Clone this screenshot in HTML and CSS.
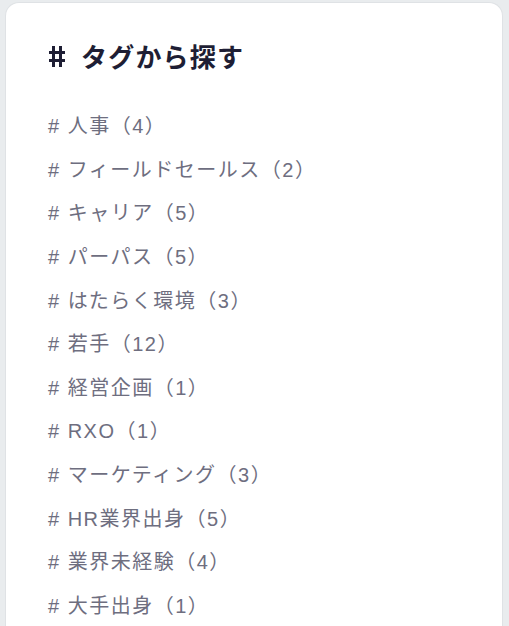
FILE: index.html
```html
<!DOCTYPE html>
<html lang="ja">
<head>
<meta charset="utf-8">
<link rel="stylesheet" href="styles.css">
</head>
<body>
<section class="card">
  <h2 class="title">
    <svg class="hash-icon" viewBox="0 0 16 21" width="16" height="21" aria-hidden="true">
      <rect x="3" y="0" width="3" height="21" fill="#1e1e34"/>
      <rect x="10" y="0" width="3" height="21" fill="#1e1e34"/>
      <rect x="0" y="5" width="16" height="3" fill="#1e1e34"/>
      <rect x="0" y="13" width="16" height="3" fill="#1e1e34"/>
    </svg>
    <span>タグから探す</span>
  </h2>
  <ul class="tags">
    <li><a class="tag"># 人事（4）</a></li>
    <li><a class="tag"># フィールドセールス（2）</a></li>
    <li><a class="tag"># キャリア（5）</a></li>
    <li><a class="tag"># パーパス（5）</a></li>
    <li><a class="tag"># はたらく環境（3）</a></li>
    <li><a class="tag"># 若手（12）</a></li>
    <li><a class="tag"># 経営企画（1）</a></li>
    <li><a class="tag"># RXO（1）</a></li>
    <li><a class="tag"># マーケティング（3）</a></li>
    <li><a class="tag"># HR業界出身（5）</a></li>
    <li><a class="tag"># 業界未経験（4）</a></li>
    <li><a class="tag"># 大手出身（1）</a></li>
  </ul>
</section>
</body>
</html>
```
FILE: styles.css
```css
html, body {
  margin: 0;
  padding: 0;
  background: #e9ecee;
  height: 100%;
  overflow: hidden;
}
body {
  padding: 2px 6px 0 5px;
  font-family: "Liberation Sans", "Noto Sans CJK JP", sans-serif;
}
.card {
  background: #ffffff;
  border: 1px solid #dfe2e5;
  border-bottom: none;
  border-radius: 14px 14px 0 0;
  padding: 28px 20px 0 42px;
  min-height: 700px;
}
.title {
  display: flex;
  align-items: center;
  margin: 0;
  font-family: "Noto Sans CJK JP", sans-serif;
  font-size: 26px;
  font-weight: 700;
  color: #1e1e34;
  letter-spacing: 1.2px;
  line-height: 50px;
}
.hash-icon {
  flex: none;
  margin-left: 1px;
  margin-right: 16px;
}
.tags {
  list-style: none;
  margin: 0;
  padding: 27px 0 0 0;
  display: flex;
  flex-direction: column;
  gap: 7.64px;
}
.tag {
  display: block;
  font-size: 20px;
  line-height: 36px;
  letter-spacing: 1.5px;
  color: #6e6e7f;
  text-decoration: none;
  white-space: nowrap;
}
```
